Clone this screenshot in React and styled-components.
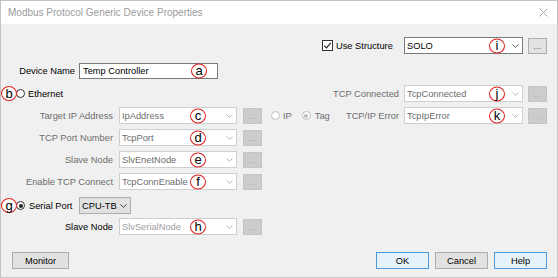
import React from "react";
import styled, { createGlobalStyle } from "styled-components";

const GlobalStyle = createGlobalStyle`
  html, body { margin: 0; padding: 0; background: #f0f0f0; }
  body { font-family: "Liberation Sans", Arial, sans-serif; font-size: 9.3px; color: #000; }
  * { box-sizing: border-box; }
`;

const Window = styled.div`
  width: 558px;
  height: 278px;
  border: 1px solid #c4c4c4;
  background: #f0f0f0;
  display: flex;
  flex-direction: column;
  overflow: hidden;
`;

const TitleBar = styled.div`
  height: 23px;
  flex-shrink: 0;
  background: #fff;
  display: flex;
  align-items: center;
  justify-content: space-between;
  padding: 0 9px 0 7px;
  font-size: 10px;
  color: #9b9b9b;
`;

const Body = styled.div`
  flex: 1;
  display: flex;
  flex-direction: column;
  padding: 13px 10px 0 0;
`;

const Row = styled.div`
  display: flex;
  align-items: center;
  height: 17px;
  flex-shrink: 0;
  margin-top: ${(p) => p.$mt || 0}px;
`;

const Group = styled.div`
  display: flex;
  align-items: center;
  flex-shrink: 0;
  width: ${(p) => (p.$w ? `${p.$w}px` : "auto")};
  margin-left: ${(p) => (p.$auto ? "auto" : `${p.$ml || 0}px`)};
`;

const FieldLabel = styled.span`
  flex-shrink: 0;
  white-space: nowrap;
  text-align: right;
  width: ${(p) => (p.$w ? `${p.$w}px` : "auto")};
  margin-right: ${(p) => p.$gap ?? 5}px;
  margin-left: ${(p) => p.$ml || 0}px;
  color: ${(p) => (p.$disabled ? "#6d6d6d" : "#000")};
`;

const comboSkins = {
  enabled: { bg: "#fff", border: "#7a7a7a", text: "#000", arrow: "#5a5a5a" },
  disabled: { bg: "#fff", border: "#cfcfcf", text: "#6d6d6d", arrow: "#b4b4b4" },
  faint: { bg: "#fff", border: "#cfcfcf", text: "#9d9d9d", arrow: "#b4b4b4" },
  button: { bg: "#e1e1e1", border: "#adadad", text: "#000", arrow: "#404040" },
};

const ComboBox = styled.div`
  position: relative;
  flex-shrink: 0;
  width: ${(p) => p.$w}px;
  height: 17px;
  display: flex;
  align-items: center;
  padding: 0 3px 0 2px;
  background: ${(p) => comboSkins[p.$skin].bg};
  border: 1px solid ${(p) => comboSkins[p.$skin].border};
  color: ${(p) => comboSkins[p.$skin].text};
`;

const ComboText = styled.span`
  flex: 1;
  white-space: nowrap;
  overflow: hidden;
`;

const TextInput = styled.div`
  position: relative;
  flex-shrink: 0;
  width: ${(p) => p.$w}px;
  height: 16px;
  display: flex;
  align-items: center;
  padding: 0 3px;
  background: #fff;
  border: 1px solid #7a7a7a;
`;

const Ellipsis = styled.div`
  flex-shrink: 0;
  width: 19px;
  height: 16px;
  margin-left: ${(p) => p.$ml ?? 5}px;
  display: flex;
  align-items: center;
  justify-content: center;
  padding-top: 2px;
  font-size: 8px;
  letter-spacing: 0.5px;
  background: ${(p) => (p.$disabled ? "#cccccc" : "#e1e1e1")};
  border: 1px solid ${(p) => (p.$disabled ? "#c4c4c4" : "#adadad")};
  color: ${(p) => (p.$disabled ? "#a2a2a2" : "#222")};
`;

const Marker = styled.span`
  position: ${(p) => (p.$inline ? "relative" : "absolute")};
  ${(p) =>
    p.$inline
      ? ""
      : `right: ${p.$r}px; top: 50%; transform: translateY(-50%);`}
  z-index: 2;
  flex-shrink: 0;
  width: 16px;
  height: 15px;
  border: 1.5px solid #e01e1e;
  border-radius: 50%;
  background: #fff;
  display: flex;
  align-items: center;
  justify-content: center;
  font-size: 13px;
  line-height: 1;
  padding-bottom: 1px;
  color: #000;
`;

const Radio = styled.span`
  position: relative;
  flex-shrink: 0;
  width: 9px;
  height: 9px;
  border-radius: 50%;
  margin-left: ${(p) => p.$ml || 0}px;
  background: #fff;
  border: 1px solid ${(p) => (p.$disabled ? "#bcbcbc" : "#333")};
  &::after {
    content: "";
    display: ${(p) => (p.$checked ? "block" : "none")};
    position: absolute;
    left: 1.5px;
    top: 1.5px;
    width: 4px;
    height: 4px;
    border-radius: 50%;
    background: ${(p) => (p.$disabled ? "#bcbcbc" : "#222")};
  }
`;

const CheckBox = styled.span`
  flex-shrink: 0;
  width: 11px;
  height: 11px;
  border: 1px solid #333;
  background: #fff;
  display: flex;
  align-items: center;
  justify-content: center;
`;

const OptionText = styled.span`
  white-space: nowrap;
  margin-left: ${(p) => p.$ml || 3}px;
  color: ${(p) => (p.$disabled ? "#6d6d6d" : "#000")};
`;

const Button = styled.div`
  flex-shrink: 0;
  width: ${(p) => p.$w || 53}px;
  height: 17px;
  margin-left: ${(p) => p.$ml || 0}px;
  display: flex;
  align-items: center;
  justify-content: center;
  background: ${(p) => (p.$primary ? "#e5f1fb" : "#e1e1e1")};
  border: 1px solid ${(p) => (p.$primary ? "#4a9be0" : "#adadad")};
  color: #000;
`;

const Chevron = ({ color }) => (
  <svg width="7" height="4" viewBox="0 0 7 4" style={{ flexShrink: 0 }}>
    <path d="M0.5 0.5 L3.5 3.3 L6.5 0.5" fill="none" stroke={color} strokeWidth="1" />
  </svg>
);

const Combo = ({ w, skin = "disabled", text, marker, r }) => (
  <ComboBox $w={w} $skin={skin}>
    <ComboText>{text}</ComboText>
    {marker && <Marker $r={r}>{marker}</Marker>}
    <Chevron color={comboSkins[skin].arrow} />
  </ComboBox>
);

const CloseIcon = () => (
  <svg width="9" height="9" viewBox="0 0 9 9">
    <path d="M0.5 0.5 L8.5 8.5 M8.5 0.5 L0.5 8.5" stroke="#a8a8a8" strokeWidth="1" />
  </svg>
);

const CheckMark = () => (
  <svg width="9" height="9" viewBox="0 0 9 9">
    <path d="M1.2 4.6 L3.5 6.9 L7.8 1.8" fill="none" stroke="#222" strokeWidth="1.1" />
  </svg>
);

const LeftField = ({ label, text, marker, skin = "disabled", labelDisabled = true }) => (
  <Group>
    <FieldLabel $w={112} $gap={6} $disabled={labelDisabled}>
      {label}
    </FieldLabel>
    <Combo w={118} skin={skin} text={text} marker={marker} r={30} />
    <Ellipsis $disabled $ml={6} >...</Ellipsis>
  </Group>
);

const RightField = ({ label, text, marker }) => (
  <Group $auto>
    <FieldLabel $disabled>{label}</FieldLabel>
    <Combo w={119} text={text} marker={marker} r={17} />
    <Ellipsis $disabled>...</Ellipsis>
  </Group>
);

export default function App() {
  return (
    <>
      <GlobalStyle />
      <Window>
        <TitleBar>
          <span>Modbus Protocol Generic Device Properties</span>
          <CloseIcon />
        </TitleBar>
        <Body>
          <Row>
            <Group $auto>
              <Group $w={82}>
                <CheckBox>
                  <CheckMark />
                </CheckBox>
                <OptionText $ml={3}>Use Structure</OptionText>
              </Group>
              <Combo w={119} skin="enabled" text="SOLO" marker="i" r={17} />
              <Ellipsis>...</Ellipsis>
            </Group>
          </Row>

          <Row $mt={8}>
            <Group>
              <FieldLabel $w={74} $gap={4}>Device Name</FieldLabel>
              <TextInput $w={139}>
                Temp Controller
                <Marker $r={10}>a</Marker>
              </TextInput>
            </Group>
          </Row>

          <Row $mt={6}>
            <Group>
              <Marker $inline>b</Marker>
              <Radio $ml={-1} />
              <OptionText $ml={3}>Ethernet</OptionText>
            </Group>
            <RightField label="TCP Connected" text="TcpConnected" marker="j" />
          </Row>

          <Row $mt={5}>
            <LeftField label="Target IP Address" text="IpAddress" marker="c" />
            <Group $ml={9}>
              <Radio $disabled />
              <OptionText $disabled $ml={3}>IP</OptionText>
              <Radio $disabled $checked $ml={10} />
              <OptionText $disabled $ml={4}>Tag</OptionText>
            </Group>
            <RightField label="TCP/IP Error" text="TcpIpError" marker="k" />
          </Row>

          <Row $mt={5}>
            <LeftField label="TCP Port Number" text="TcpPort" marker="d" />
          </Row>

          <Row $mt={5}>
            <LeftField label="Slave Node" text="SlvEnetNode" marker="e" />
          </Row>

          <Row $mt={5}>
            <LeftField label="Enable TCP Connect" text="TcpConnEnable" marker="f" />
          </Row>

          <Row $mt={7}>
            <Group $w={78}>
              <Marker $inline>g</Marker>
              <Radio $ml={-1} $checked />
              <OptionText $ml={4}>Serial Port</OptionText>
            </Group>
            <Combo w={52} skin="button" text="CPU-TB" />
          </Row>

          <Row $mt={4}>
            <LeftField
              label="Slave Node"
              text="SlvSerialNode"
              marker="h"
              skin="faint"
              labelDisabled={false}
            />
          </Row>

          <Row $mt={17}>
            <Button $w={57} $ml={11}>Monitor</Button>
            <Group $auto>
              <Button $primary>OK</Button>
              <Button $ml={6}>Cancel</Button>
              <Button $primary $ml={6}>Help</Button>
            </Group>
          </Row>
        </Body>
      </Window>
    </>
  );
}
